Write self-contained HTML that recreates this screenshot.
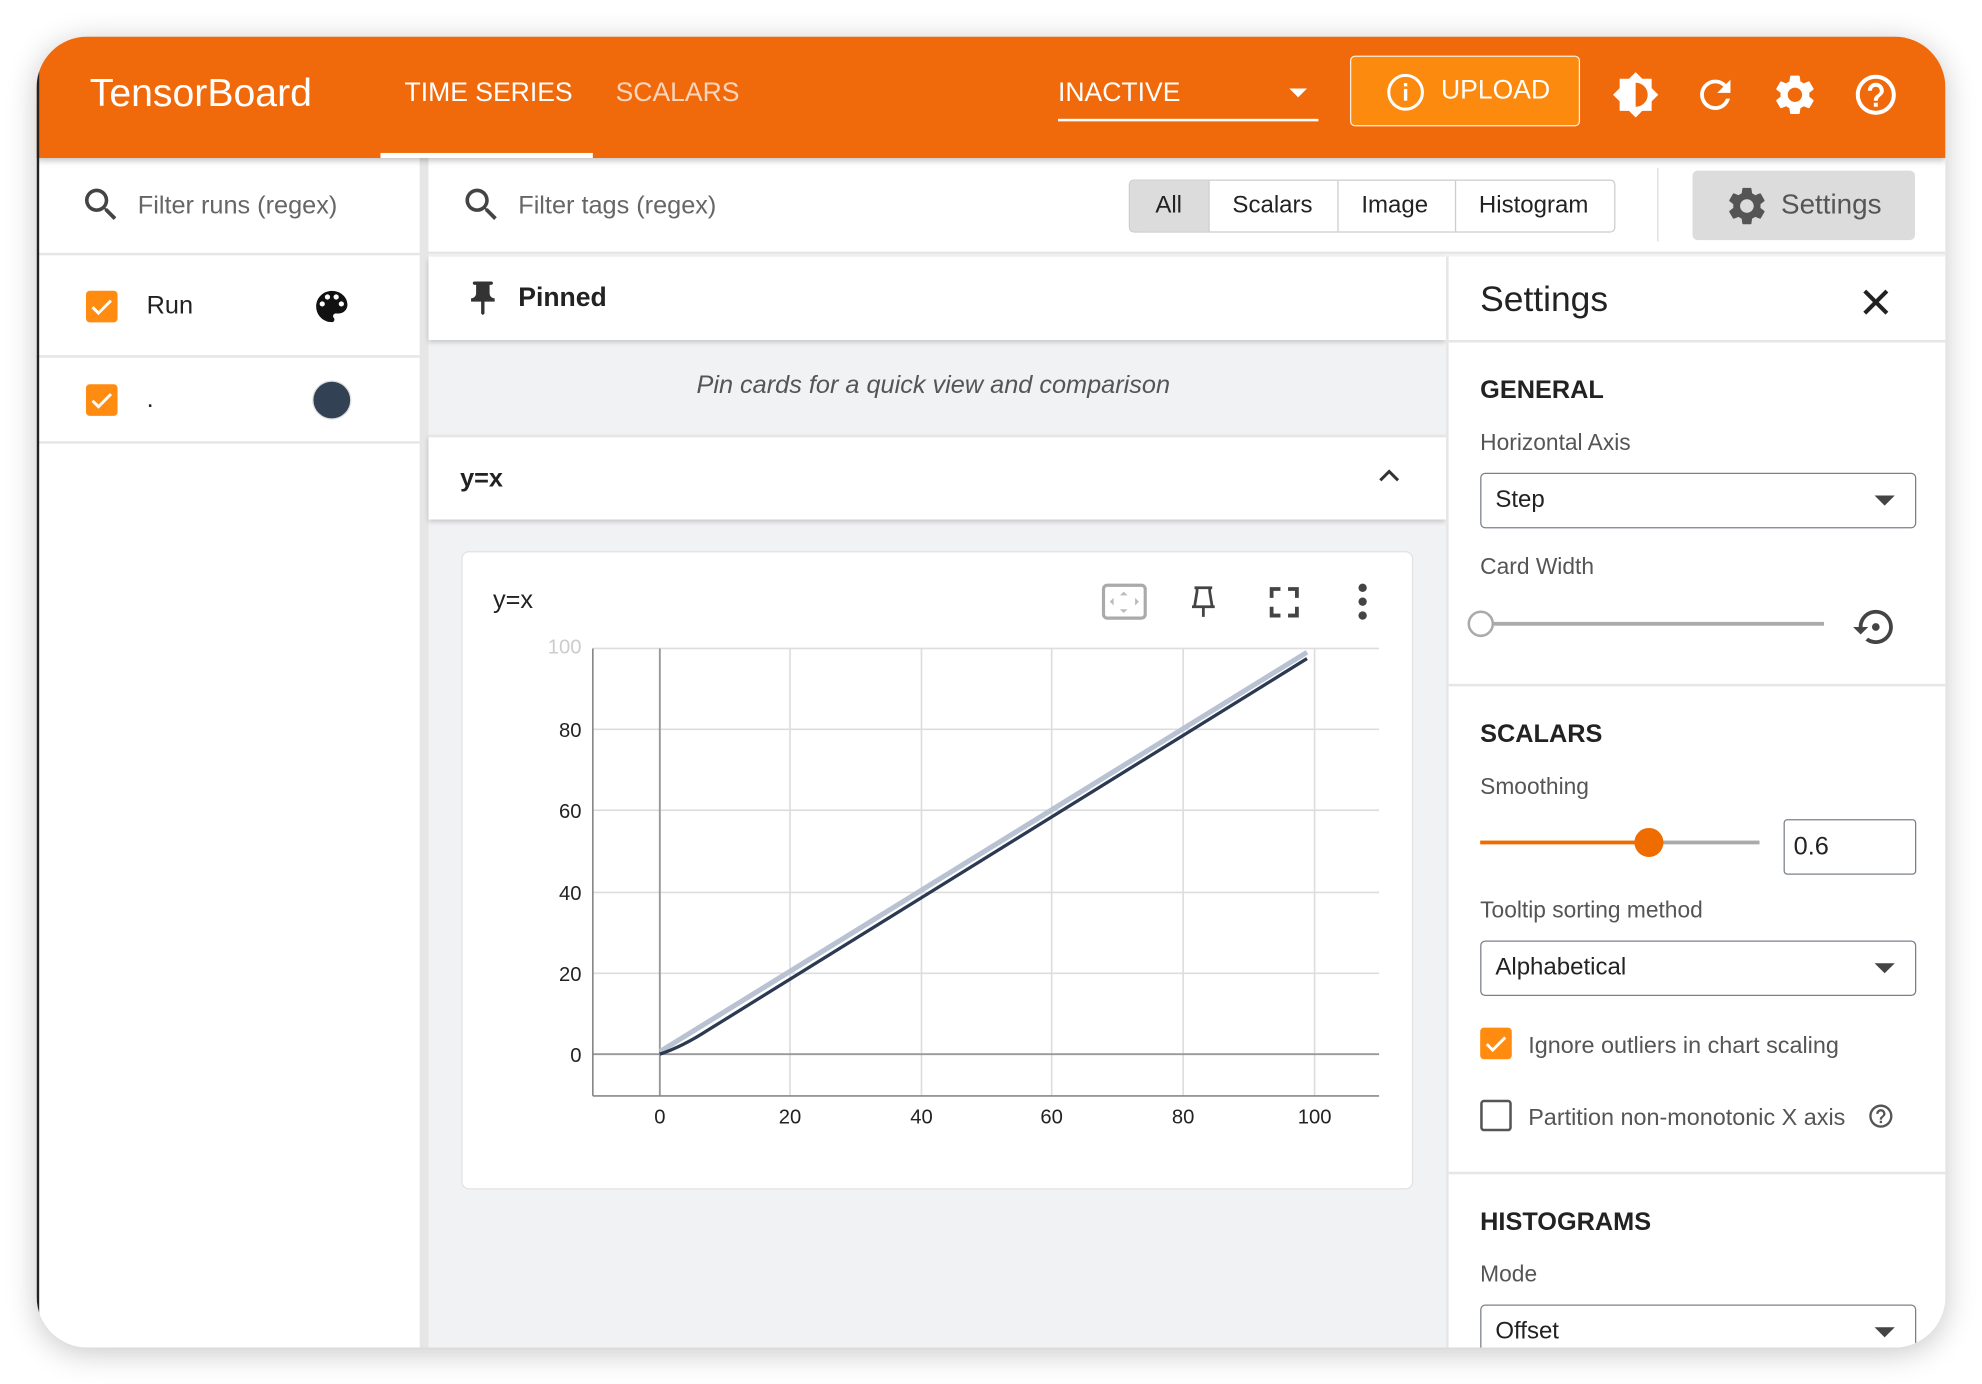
<!DOCTYPE html>
<html><head><meta charset="utf-8"><style>
*{box-sizing:border-box;margin:0;padding:0}
html,body{width:1982px;height:1384px;overflow:hidden;background:#fff;font-family:"Liberation Sans",Roboto,sans-serif}
#s{position:absolute;left:0;top:0;width:1568px;height:1095px;transform:scale(1.26403);transform-origin:0 0}
.a{position:absolute}
.win{left:29px;top:29px;width:1510px;height:1037px;border-radius:40px;overflow:hidden;background:#f1f2f4;box-shadow:0 4px 24px rgba(0,0,0,.22)}
.t{position:absolute;white-space:nowrap}
svg{position:absolute}
.sel{position:absolute;border:1.5px solid #7a808a;border-radius:4px;background:#fff;font-size:19px;color:#222}
.sel span{position:absolute;left:11px;top:10px}
.sel i{position:absolute;right:16px;top:17px;border-left:8px solid transparent;border-right:8px solid transparent;border-top:8px solid #444}
.cb{position:absolute;width:25px;height:25px;border-radius:3px;background:#ff8c10}
</style></head><body><div id="s">
<div class="a win">
 <div class="a" style="left:0;top:0;width:2px;height:1037px;background:#222;z-index:5"></div>
 <!-- header -->
 <div class="a" style="left:0;top:0;width:1510px;height:96px;background:#f0690b;box-shadow:0 2px 5px rgba(0,0,0,.25);z-index:3">
  <div class="t" style="left:42px;top:27px;font-size:31px;color:#fff">TensorBoard</div>
  <div class="t" style="left:291px;top:33px;font-size:21px;color:#fff">TIME SERIES</div>
  <div class="a" style="left:272px;top:92px;width:168px;height:4px;background:#fff"></div>
  <div class="t" style="left:458px;top:33px;font-size:21px;color:rgba(255,255,255,.72)">SCALARS</div>
  <div class="t" style="left:808px;top:33px;font-size:21px;color:#fff">INACTIVE</div>
  <div class="a" style="left:991px;top:41px;border-left:7px solid transparent;border-right:7px solid transparent;border-top:7px solid #fff"></div>
  <div class="a" style="left:808px;top:65px;width:206px;height:2px;background:#fff"></div>
  <div class="a" style="left:1039px;top:15px;width:182px;height:56px;background:#fb8a0e;border:1.5px solid rgba(255,255,255,.85);border-radius:4px"></div>
  <svg style="left:1067px;top:28px" width="32" height="32" viewBox="0 0 24 24"><circle cx="12" cy="12" r="10" fill="none" stroke="#fff" stroke-width="1.8"/><rect x="11" y="10" width="2" height="7" fill="#fff"/><rect x="11" y="6.5" width="2" height="2" fill="#fff"/></svg>
  <div class="t" style="left:1111px;top:31px;font-size:21px;color:#fff">UPLOAD</div>
  <svg style="left:1246px;top:27px" width="38" height="38" viewBox="0 0 24 24"><path fill="#fff" d="M20 15.31L23.31 12 20 8.69V4h-4.69L12 .69 8.69 4H4v4.69L.69 12 4 15.31V20h4.69L12 23.31 15.31 20H20v-4.69zM12 18V6c3.31 0 6 2.69 6 6s-2.69 6-6 6z"/></svg>
  <svg style="left:1310px;top:28px" width="36" height="36" viewBox="0 0 24 24"><path fill="#fff" d="M17.65 6.35C16.2 4.9 14.21 4 12 4c-4.42 0-7.99 3.58-7.99 8s3.57 8 7.99 8c3.73 0 6.84-2.55 7.73-6h-2.08c-.82 2.33-3.04 4-5.65 4-3.31 0-6-2.69-6-6s2.69-6 6-6c1.66 0 3.14.69 4.22 1.78L13 11h7V4l-2.35 2.35z"/></svg>
  <svg style="left:1372px;top:27px" width="38" height="38" viewBox="0 0 24 24"><path fill="#fff" d="M19.14 12.94c.04-.3.06-.61.06-.94 0-.32-.02-.64-.07-.94l2.03-1.58c.18-.14.23-.41.12-.61l-1.92-3.32c-.12-.22-.37-.29-.59-.22l-2.39.96c-.5-.38-1.03-.7-1.62-.94l-.36-2.54c-.04-.24-.24-.41-.48-.41h-3.84c-.24 0-.43.17-.47.41l-.36 2.54c-.59.24-1.13.57-1.62.94l-2.39-.96c-.22-.08-.47 0-.59.22L2.74 8.87c-.12.21-.08.47.12.61l2.03 1.58c-.05.3-.09.63-.09.94s.02.64.07.94l-2.03 1.58c-.18.14-.23.41-.12.61l1.92 3.32c.12.22.37.29.59.22l2.39-.96c.5.38 1.03.7 1.62.94l.36 2.54c.05.24.24.41.48.41h3.84c.24 0 .44-.17.47-.41l.36-2.54c.59-.24 1.13-.56 1.62-.94l2.39.96c.22.08.47 0 .59-.22l1.92-3.32c.12-.22.07-.47-.12-.61l-2.01-1.58zM12 15.6c-1.98 0-3.6-1.62-3.6-3.6s1.62-3.6 3.6-3.6 3.6 1.62 3.6 3.6-1.62 3.6-3.6 3.6z"/></svg>
  <svg style="left:1436px;top:27px" width="38" height="38" viewBox="0 0 24 24"><path fill="#fff" d="M11 18h2v-2h-2v2zm1-16C6.48 2 2 6.48 2 12s4.48 10 10 10 10-4.48 10-10S17.52 2 12 2zm0 18c-4.41 0-8-3.59-8-8s3.59-8 8-8 8 3.59 8 8-3.59 8-8 8zm0-14c-2.21 0-4 1.79-4 4h2c0-1.1.9-2 2-2s2 .9 2 2c0 2-3 1.75-3 5h2c0-2.25 3-2.5 3-5 0-2.21-1.79-4-4-4z"/></svg>
 </div>
 <!-- left sidebar -->
 <div class="a" style="left:0;top:96px;width:310px;height:941px;background:#fff;border-right:7px solid #e6e6e6">
  <svg style="left:34px;top:20px" width="34" height="34" viewBox="0 0 24 24"><path fill="#444" d="M15.5 14h-.79l-.28-.27C15.41 12.59 16 11.11 16 9.5 16 5.91 13.09 3 9.5 3S3 5.910 3 9.5 5.91 16 9.5 16c1.61 0 3.09-.59 4.23-1.57l.27.28v.79l5 4.99L20.49 19l-4.99-5zm-6 0C7.01 14 5 11.99 5 9.5S7.01 5 9.5 5 14 7.01 14 9.5 11.99 14 9.5 14z"/></svg>
  <div class="t" style="left:80px;top:27px;font-size:20px;color:#666">Filter runs (regex)</div>
  <div class="a" style="left:0;top:75px;width:303px;height:2px;background:#e6e6e6"></div>
  <div class="cb" style="left:39px;top:105px"><svg width="25" height="25" viewBox="0 0 24 24"><path d="M5 12.5l4.5 4.5L19 7.5" fill="none" stroke="#fff" stroke-width="2.2"/></svg></div>
  <div class="t" style="left:87px;top:106px;font-size:20px;color:#222">Run</div>
  <svg style="left:217px;top:101px" width="33" height="33" viewBox="0 0 24 24"><path fill="#111" d="M12 3c-4.97 0-9 4.03-9 9s4.03 9 9 9c.83 0 1.5-.67 1.5-1.5 0-.39-.15-.74-.39-1.01-.23-.26-.38-.61-.38-.99 0-.83.67-1.5 1.5-1.5H16c2.76 0 5-2.24 5-5 0-4.42-4.03-8-9-8zm-5.5 9c-.83 0-1.5-.67-1.5-1.5S5.67 9 6.5 9 8 9.67 8 10.5 7.33 12 6.5 12zm3-4C8.67 8 8 7.33 8 6.5S8.67 5 9.5 5s1.5.67 1.5 1.5S10.33 8 9.5 8zm5 0c-.83 0-1.5-.67-1.5-1.5S13.67 5 14.5 5s1.5.67 1.5 1.5S15.33 8 14.5 8zm3 4c-.83 0-1.5-.67-1.5-1.5S16.67 9 17.5 9s1.5.67 1.5 1.5-.67 1.5-1.5 1.5z"/></svg>
  <div class="a" style="left:0;top:156px;width:303px;height:2px;background:#e6e6e6"></div>
  <div class="cb" style="left:39px;top:179px"><svg width="25" height="25" viewBox="0 0 24 24"><path d="M5 12.5l4.5 4.5L19 7.5" fill="none" stroke="#fff" stroke-width="2.2"/></svg></div>
  <div class="t" style="left:87px;top:180px;font-size:20px;color:#222">.</div>
  <div class="a" style="left:218px;top:176px;width:31px;height:31px;border-radius:50%;background:#334155;border:1px solid #ddd"></div>
  <div class="a" style="left:0;top:224px;width:303px;height:2px;background:#e6e6e6"></div>
 </div>
 <!-- top filter row main -->
 <div class="a" style="left:310px;top:96px;width:1200px;height:76px;background:#fff;border-bottom:2px solid #e6e6e6">
  <svg style="left:25px;top:20px" width="34" height="34" viewBox="0 0 24 24"><path fill="#444" d="M15.5 14h-.79l-.28-.27C15.41 12.59 16 11.11 16 9.5 16 5.91 13.09 3 9.5 3S3 5.91 3 9.5 5.91 16 9.5 16c1.61 0 3.09-.59 4.23-1.57l.27.28v.79l5 4.99L20.49 19l-4.99-5zm-6 0C7.01 14 5 11.99 5 9.5S7.01 5 9.5 5 14 7.01 14 9.5 11.99 14 9.5 14z"/></svg>
  <div class="t" style="left:71px;top:27px;font-size:20px;color:#666">Filter tags (regex)</div>
  <div class="a" style="left:554px;top:17px;width:385px;height:42px;border:1.5px solid #ccc;border-radius:4px;overflow:hidden;font-size:19px;color:#222">
   <div class="a" style="left:0;top:0;width:62px;height:42px;background:#dcdcdc"></div>
   <div class="t" style="left:20px;top:9px">All</div>
   <div class="a" style="left:62px;top:0;width:1px;height:42px;background:#ccc"></div>
   <div class="t" style="left:81px;top:9px">Scalars</div>
   <div class="a" style="left:164px;top:0;width:1px;height:42px;background:#ccc"></div>
   <div class="t" style="left:183px;top:9px">Image</div>
   <div class="a" style="left:257px;top:0;width:1px;height:42px;background:#ccc"></div>
   <div class="t" style="left:276px;top:9px">Histogram</div>
  </div>
  <div class="a" style="left:972px;top:8px;width:1px;height:58px;background:#ddd"></div>
  <div class="a" style="left:1000px;top:10px;width:176px;height:55px;background:#dcdcdc;border-radius:4px"></div>
  <svg style="left:1025px;top:20px" width="36" height="36" viewBox="0 0 24 24"><path fill="#555" d="M19.14 12.94c.04-.3.06-.61.06-.94 0-.32-.02-.64-.07-.94l2.03-1.58c.18-.14.23-.41.12-.61l-1.92-3.32c-.12-.22-.37-.29-.59-.22l-2.39.96c-.5-.38-1.03-.7-1.62-.94l-.36-2.54c-.04-.24-.24-.41-.48-.41h-3.84c-.24 0-.43.17-.47.41l-.36 2.54c-.59.24-1.13.57-1.62.94l-2.39-.96c-.22-.08-.47 0-.59.22L2.74 8.87c-.12.21-.08.47.12.61l2.03 1.58c-.05.3-.09.63-.09.94s.02.64.07.94l-2.03 1.58c-.18.14-.23.41-.12.61l1.92 3.32c.12.22.37.29.59.22l2.39-.96c.5.38 1.03.7 1.62.94l.36 2.54c.05.24.24.41.48.41h3.84c.24 0 .44-.17.47-.41l.36-2.54c.59-.24 1.13-.56 1.62-.94l2.39.96c.22.08.47 0 .59-.22l1.92-3.32c.12-.22.07-.47-.12-.61l-2.01-1.58zM12 15.6c-1.98 0-3.6-1.62-3.6-3.6s1.62-3.6 3.6-3.6 3.6 1.62 3.6 3.6-1.62 3.6-3.6 3.6z"/></svg>
  <div class="t" style="left:1070px;top:24px;font-size:22px;color:#555">Settings</div>
 </div>
 <!-- pinned -->
 <div class="a" style="left:310px;top:174px;width:805px;height:66px;background:#fff;box-shadow:0 2px 4px rgba(0,0,0,.2)">
  <svg style="left:27px;top:16px" width="32" height="34" viewBox="0 0 24 24"><path fill="#333" d="M16 9V4h1c.55 0 1-.45 1-1s-.45-1-1-1H7c-.55 0-1 .45-1 1s.45 1 1 1h1v5c0 1.66-1.34 3-3 3v2h5.97v7l1 1 1-1v-7H19v-2c-1.66 0-3-1.34-3-3z"/></svg>
  <div class="t" style="left:71px;top:21px;font-size:21px;font-weight:bold;color:#222">Pinned</div>
 </div>
 <div class="t" style="left:522px;top:265px;font-size:20px;font-style:italic;color:#555">Pin cards for a quick view and comparison</div>
 <div class="a" style="left:310px;top:315px;width:805px;height:67px;background:#fff;border-top:2px solid #e6e6e6;box-shadow:0 2px 4px rgba(0,0,0,.2)">
  <div class="t" style="left:25px;top:22px;font-size:20px;font-weight:bold;color:#222">y=x</div>
  <svg style="left:748px;top:19px" width="24" height="24" viewBox="0 0 24 24"><path d="M5 15l7-7 7 7" fill="none" stroke="#333" stroke-width="2.4"/></svg>
 </div>
 <!-- card -->
 <div class="a" style="left:336px;top:407px;width:753px;height:505px;background:#fff;border:1.5px solid #e2e2e2;border-radius:6px"></div>
 <div class="t" style="left:361px;top:435px;font-size:20px;color:#222">y=x</div>
 <svg class="a" style="left:0;top:0" width="1510" height="1037" viewBox="29 29 1510 1037">
  <rect x="873" y="463" width="33" height="26" rx="3" fill="none" stroke="#aaa" stroke-width="2.5"/>
  <path d="M889 468l-3 3h6zM889 485l-3-3h6zM878 476l3-3v6zM901 476l-3-3v6z" fill="#bbb"/>
  <path d="M945 465h14M947 465v3M957 465v3M947 468l-2 12M957 468l2 12M943 480h18M952 480v8" stroke="#444" stroke-width="2.2" fill="none"/>
  <path d="M1006 473v-7h7M1019 466h7v7M1026 480v7h-7M1013 487h-7v-7" stroke="#444" stroke-width="3" fill="none"/>
  <circle cx="1078" cy="465" r="3.3" fill="#444"/><circle cx="1078" cy="476" r="3.3" fill="#444"/><circle cx="1078" cy="487" r="3.3" fill="#444"/>
  <g stroke="#ddd" stroke-width="1.3">
   <line x1="469" y1="513" x2="1091" y2="513"/><line x1="469" y1="577" x2="1091" y2="577"/><line x1="469" y1="641" x2="1091" y2="641"/><line x1="469" y1="706" x2="1091" y2="706"/><line x1="469" y1="770" x2="1091" y2="770"/>
   <line x1="625" y1="513" x2="625" y2="867"/><line x1="729" y1="513" x2="729" y2="867"/><line x1="832" y1="513" x2="832" y2="867"/><line x1="936" y1="513" x2="936" y2="867"/><line x1="1040" y1="513" x2="1040" y2="867"/>
  </g>
  <line x1="522" y1="513" x2="522" y2="867" stroke="#999" stroke-width="1.5"/>
  <line x1="469" y1="834" x2="1091" y2="834" stroke="#999" stroke-width="1.5"/>
  <line x1="469" y1="513" x2="469" y2="867" stroke="#888" stroke-width="1.3"/>
  <line x1="469" y1="867" x2="1091" y2="867" stroke="#888" stroke-width="1.3"/>
  <line x1="522" y1="832" x2="1034" y2="516" stroke="#b8c2d2" stroke-width="4"/>
  <path d="M522 834 Q540 828 560 815 L1034 521" stroke="#2b3a52" stroke-width="2.6" fill="none"/>
  <g font-family="Liberation Sans, sans-serif" font-size="16" fill="#222" text-anchor="end">
   <text x="460" y="583">80</text><text x="460" y="647">60</text><text x="460" y="712">40</text><text x="460" y="776">20</text><text x="460" y="840">0</text>
  </g>
  <text x="460" y="517" font-family="Liberation Sans" font-size="16" fill="#ccc" text-anchor="end">100</text>
  <g font-family="Liberation Sans, sans-serif" font-size="16" fill="#222" text-anchor="middle">
   <text x="522" y="889">0</text><text x="625" y="889">20</text><text x="729" y="889">40</text><text x="832" y="889">60</text><text x="936" y="889">80</text><text x="1040" y="889">100</text>
  </g>
 </svg>
 <!-- settings panel -->
 <div class="a" style="left:1115px;top:174px;width:395px;height:863px;background:#fff;border-left:2px solid #e6e6e6">
  <div class="t" style="left:25px;top:18px;font-size:28px;color:#222">Settings</div>
  <svg style="left:323px;top:21px" width="30" height="30" viewBox="0 0 24 24"><path d="M5 5l14 14M19 5L5 19" stroke="#222" stroke-width="2.6"/></svg>
  <div class="a" style="left:0;top:66px;width:395px;height:2px;background:#e6e6e6"></div>
  <div class="t" style="left:25px;top:95px;font-size:20px;font-weight:bold;color:#222">GENERAL</div>
  <div class="t" style="left:25px;top:137px;font-size:18px;color:#555">Horizontal Axis</div>
  <div class="sel" style="left:25px;top:171px;width:345px;height:44px"><span>Step</span><i></i></div>
  <div class="t" style="left:25px;top:235px;font-size:18px;color:#555">Card Width</div>
  <div class="a" style="left:25px;top:289px;width:272px;height:3px;background:#aaa"></div>
  <div class="a" style="left:15px;top:280px;width:21px;height:21px;border-radius:50%;border:2.5px solid #aaa;background:#fff"></div>
  <svg style="left:320px;top:275px" width="36" height="36" viewBox="0 0 24 24"><path fill="#444" d="M14 12c0-1.1-.9-2-2-2s-2 .9-2 2 .9 2 2 2 2-.9 2-2zm-2-9c-4.97 0-9 4.03-9 9H0l4 4 4-4H5c0-3.87 3.13-7 7-7s7 3.13 7 7-3.13 7-7 7c-1.51 0-2.91-.49-4.06-1.3l-1.42 1.44C8.04 20.3 9.94 21 12 21c4.97 0 9-4.03 9-9s-4.03-9-9-9z"/></svg>
  <div class="a" style="left:0;top:338px;width:395px;height:2px;background:#e6e6e6"></div>
  <div class="t" style="left:25px;top:367px;font-size:20px;font-weight:bold;color:#222">SCALARS</div>
  <div class="t" style="left:25px;top:409px;font-size:18px;color:#555">Smoothing</div>
  <div class="a" style="left:25px;top:462px;width:133px;height:3px;background:#ef6c00"></div>
  <div class="a" style="left:158px;top:462px;width:88px;height:3px;background:#aaa"></div>
  <div class="a" style="left:147px;top:452px;width:23px;height:23px;border-radius:50%;background:#ef6c00"></div>
  <div class="a" style="left:265px;top:445px;width:105px;height:44px;border:1.5px solid #7a808a;border-radius:3px;font-size:20px;color:#222"><span class="t" style="left:7px;top:10px">0.6</span></div>
  <div class="t" style="left:25px;top:507px;font-size:18px;color:#555">Tooltip sorting method</div>
  <div class="sel" style="left:25px;top:541px;width:345px;height:44px"><span>Alphabetical</span><i></i></div>
  <div class="cb" style="left:25px;top:610px"><svg width="25" height="25" viewBox="0 0 24 24"><path d="M5 12.5l4.5 4.5L19 7.5" fill="none" stroke="#fff" stroke-width="2.2"/></svg></div>
  <div class="t" style="left:63px;top:613px;font-size:18.5px;color:#555">Ignore outliers in chart scaling</div>
  <div class="a" style="left:25px;top:667px;width:25px;height:25px;border-radius:3px;border:2.5px solid #555"></div>
  <div class="t" style="left:63px;top:670px;font-size:18.5px;color:#555">Partition non-monotonic X axis</div>
  <svg style="left:331px;top:669px" width="22" height="22" viewBox="0 0 24 24"><path fill="#555" d="M11 18h2v-2h-2v2zm1-16C6.48 2 2 6.48 2 12s4.48 10 10 10 10-4.48 10-10S17.52 2 12 2zm0 18c-4.41 0-8-3.59-8-8s3.59-8 8-8 8 3.59 8 8-3.59 8-8 8zm0-14c-2.21 0-4 1.79-4 4h2c0-1.1.9-2 2-2s2 .9 2 2c0 2-3 1.75-3 5h2c0-2.25 3-2.5 3-5 0-2.21-1.79-4-4-4z"/></svg>
  <div class="a" style="left:0;top:724px;width:395px;height:2px;background:#e6e6e6"></div>
  <div class="t" style="left:25px;top:753px;font-size:20px;font-weight:bold;color:#222">HISTOGRAMS</div>
  <div class="t" style="left:25px;top:795px;font-size:18px;color:#555">Mode</div>
  <div class="sel" style="left:25px;top:829px;width:345px;height:44px"><span>Offset</span><i></i></div>
 </div>
</div>
</div></body></html>
